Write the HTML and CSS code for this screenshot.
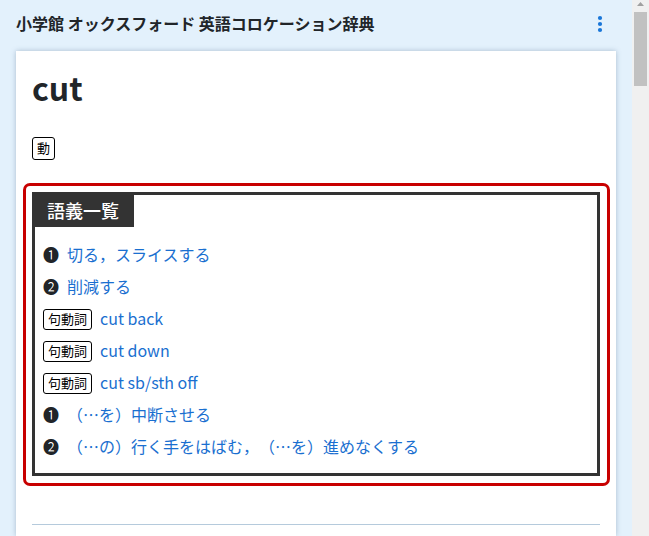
FILE: index.html
```
<!DOCTYPE html>
<html lang="ja">
<head>
<meta charset="utf-8">
<meta name="viewport" content="width=device-width, initial-scale=1">
<title>cut</title>
<link rel="stylesheet" href="styles.css">
</head>
<body>
<div class="page">
  <header class="header">
    <h2 class="dictionary">小学館 オックスフォード 英語コロケーション辞典</h2>
    <button class="menu" type="button" aria-label="メニュー">
      <svg width="6" height="18" viewBox="0 0 6 18" fill="#1976d8"><circle cx="3" cy="3" r="2.1"/><circle cx="3" cy="9" r="2.1"/><circle cx="3" cy="15" r="2.1"/></svg>
    </button>
  </header>
  <main class="card">
    <h1 class="headword">cut</h1>
    <div class="pos"><span class="badge badge-pos">動</span></div>
    <div class="highlight">
      <section class="senses">
        <h3 class="senses-title">語義一覧</h3>
        <ul class="sense-list">
          <li><span class="number">❶</span><a href="#s1">切る，スライスする</a></li>
          <li><span class="number">❷</span><a href="#s2">削減する</a></li>
          <li><span class="badge">句動詞</span><a href="#p1">cut back</a></li>
          <li><span class="badge">句動詞</span><a href="#p2">cut down</a></li>
          <li><span class="badge">句動詞</span><a href="#p3">cut sb/sth off</a></li>
          <li><span class="number">❶</span><a href="#p3-1">（…を）中断させる</a></li>
          <li><span class="number">❷</span><a href="#p3-2">（…の）行く手をはばむ，（…を）進めなくする</a></li>
        </ul>
      </section>
    </div>
    <hr class="divider">
  </main>
</div>
<div class="scrollbar" aria-hidden="true">
  <svg width="7" height="4" viewBox="0 0 7 4"><path d="M3.5 0 7 4H0z" fill="#a0a0a0"/></svg>
  <div class="thumb"></div>
</div>
</body>
</html>
```

FILE: styles.css
```
* {
  box-sizing: border-box;
}

body {
  margin: 0;
  min-height: 100vh;
  display: grid;
  grid-template-columns: 1fr 17px;
  background: #e3f1fc;
  color: #212529;
  font-family: "Noto Sans CJK JP", sans-serif;
  font-size: 16px;
  line-height: 24px;
  text-spacing-trim: space-all;
}

.page {
  display: flex;
  flex-direction: column;
  padding: 0 16px;
  min-width: 0;
}

.header {
  display: flex;
  align-items: center;
  justify-content: space-between;
  height: 51px;
  padding-bottom: 3px;
}

.dictionary {
  margin: 0;
  padding-bottom: 2px;
  font-size: 16px;
  font-weight: 700;
}

.menu {
  display: flex;
  align-items: center;
  justify-content: center;
  width: 32px;
  height: 32px;
  padding: 0;
  border: 0;
  background: none;
}

.card {
  flex: 1;
  padding: 12px 16px 11px;
  background: #fff;
  box-shadow: 0 0 5px rgba(60, 90, 120, 0.35);
}

.headword {
  margin: 0;
  font-size: 32px;
  font-weight: 700;
  line-height: 48px;
}

.pos {
  display: flex;
  margin-top: 26px;
}

.badge {
  padding: 0 4px 1px;
  border: 1px solid #000;
  border-radius: 3px;
  color: #000;
  font-size: 13px;
  line-height: 18px;
}

.badge-pos {
  line-height: 20px;
}

.highlight {
  margin: 23px -10px 0 -9px;
  padding: 6px 7px 7px 6px;
  border: 3px solid #c80000;
  border-radius: 7px;
}

.senses {
  border: 3px solid #333;
}

.senses-title {
  width: fit-content;
  margin: 0;
  padding: 0 15px 2px 12px;
  background: #333;
  color: #fff;
  font-size: 18px;
  font-weight: 500;
  line-height: 30px;
}

.sense-list {
  margin: 0;
  padding: 12px 8px 10px;
  list-style: none;
}

.sense-list li {
  display: flex;
  align-items: center;
  gap: 8px;
  min-height: 32px;
}

.number,
.sense-list a {
  padding-bottom: 2px;
}

.sense-list a {
  color: #1a6fd0;
  text-decoration: none;
}

.divider {
  margin: 38px 0 0;
  border: 0;
  border-top: 1px solid #b5cadc;
}

.scrollbar {
  display: flex;
  flex-direction: column;
  align-items: center;
  gap: 6px;
  padding: 2px 2px 0;
  background: #f0f0f0;
}

.thumb {
  width: 13px;
  height: 74px;
  background: #c1c1c1;
}
```
